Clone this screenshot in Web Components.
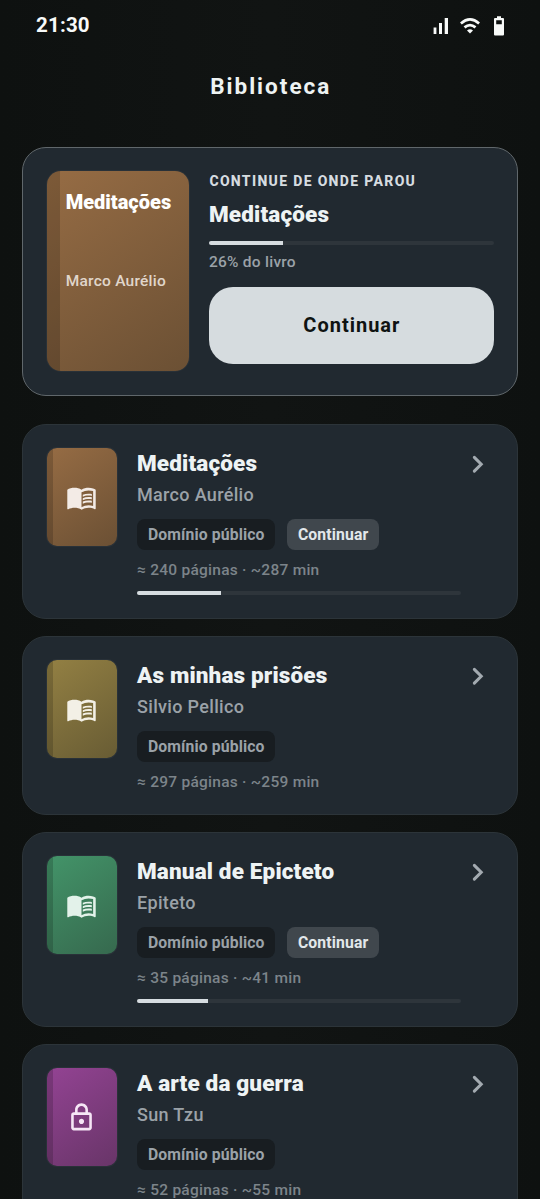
<!DOCTYPE html>
<html lang="pt">
<head>
<meta charset="utf-8">
<title>Biblioteca</title>
<style>
html,body{margin:0;background:#101312}
body{width:540px;height:1199px;overflow:hidden;font-family:Roboto,"Noto Sans",sans-serif;color:#eef3f4}
</style>
</head>
<body>
<library-app></library-app>
<script>
const define = (name, html) => customElements.define(name, class extends HTMLElement {
  connectedCallback() {
    if (this.shadowRoot) return;
    const t = document.createElement('template');
    t.innerHTML = typeof html === 'function' ? html(this) : html;
    this.attachShadow({mode: 'open'}).append(t.content.cloneNode(true));
  }
});

define('status-bar', `
<style>
:host{display:flex;align-items:center;justify-content:space-between;height:50px;padding:0 36.500px 0 36px;box-sizing:border-box;color:#f8faf9}
.time{font-size:20.5px;font-weight:700;letter-spacing:.2px}
.icons{display:flex;align-items:center;padding-top:1px}
svg{display:block}
</style>
<span class="time">21:30</span>
<span class="icons">
<svg width="16" height="16" viewBox="0 0 16 16" fill="#f8faf9" style="margin-right:10.500px"><rect x=".6" y="9.500" width="2.800" height="6.500"/><rect x="6" y="5" width="3" height="11"/><rect x="11.700" y="0" width="3.300" height="16"/></svg>
<svg width="20" height="16" viewBox="0 0 20 16" style="margin-right:14px" fill="none" stroke="#f8faf9" stroke-width="2.7"><path d="M.9 5.400Q10-2.500 19.100 5.400"/><path d="M4.500 9.400Q10 4.700 15.500 9.400"/><path d="M10 15.500 7 12.500Q10 10.200 13 12.500Z" fill="#f8faf9" stroke="none"/></svg>
<svg width="10" height="20" viewBox="0 0 10 20" fill="#f8faf9"><path fill-rule="evenodd" d="M3 .3h4V2h2q1 0 1 1v15.500q0 1-1 1H1q-1 0-1-1V3Q0 2 1 2h2zM2.200 4.200v4h5.600v-4z"/></svg>
</span>`);

define('page-title', `
<style>
:host{display:block;height:97px;box-sizing:border-box;padding:20.500px 0 0 1.500px;text-align:center;font-size:22.5px;line-height:30px;font-weight:700;letter-spacing:2px;color:#eef3f2}
</style><slot></slot>`);

define('progress-bar', el => `
<style>
:host{display:block;height:4px;border-radius:2px;background:#2e353b;overflow:hidden}
div{height:100%;width:${el.getAttribute('value')}%;background:#d6dce0}
</style><div></div>`);

define('book-cover', `
<style>
:host{display:flex;box-sizing:border-box;border-radius:var(--r,10px);overflow:hidden;background:linear-gradient(144.5deg,var(--a),var(--b));box-shadow:0 0 0 1px rgba(255,255,255,.04)}
.spine{flex:none;width:var(--spine,6.500px);background:rgba(0,0,0,.17)}
.face{flex:1;display:flex;flex-direction:column}
</style><div class="spine"></div><div class="face"><slot></slot></div>`);

define('book-icon', el => `
<style>:host{display:block}svg{display:block}</style>
<svg width="31" height="31" viewBox="0 0 24 24" fill="${el.getAttribute('color')}">${el.getAttribute('kind') === 'lock'
 ? '<path d="M18 8h-1V6c0-2.760-2.240-5-5-5S7 3.240 7 6v2H6c-1.100 0-2 .9-2 2v10c0 1.100.9 2 2 2h12c1.100 0 2-.9 2-2V10c0-1.100-.9-2-2-2zM9 6c0-1.660 1.340-3 3-3s3 1.340 3 3v2H9V6zm9 14H6V10h12v10zm-6-3c1.100 0 2-.9 2-2s-.9-2-2-2-2 .9-2 2 .9 2 2 2z"/>'
 : '<path d="M21 5c-1.11-.35-2.33-.5-3.5-.5-1.95 0-4.05.4-5.5 1.5-1.45-1.1-3.55-1.5-5.5-1.5S2.45 4.9 1 6v14.65c0 .25.25.5.5.5.1 0 .15-.05.25-.05C3.1 20.45 5.05 20 6.5 20c1.95 0 4.05.4 5.5 1.5 1.35-.85 3.8-1.5 5.5-1.5 1.65 0 3.35.3 4.75 1.050.1.050.15.050.25.050.25 0 .5-.25.5-.5V6c-.6-.45-1.25-.75-2-1zm0 13.5c-1.1-.35-2.3-.5-3.5-.5-1.7 0-4.15.65-5.5 1.5V8c1.35-.85 3.8-1.5 5.5-1.5 1.2 0 2.4.15 3.5.5v11.5z"/><path d="M17.5 10.5c.88 0 1.73.09 2.5.26V9.24c-.79-.15-1.64-.24-2.5-.24-1.7 0-3.24.29-4.5.83v1.66c1.13-.64 2.7-.99 4.5-.99zM13 12.490v1.66c1.13-.64 2.7-.99 4.5-.99.88 0 1.73.09 2.5.26V11.9c-.79-.15-1.64-.24-2.5-.24-1.7 0-3.24.3-4.5.83zM17.5 14.330c-1.7 0-3.24.29-4.5.83v1.66c1.13-.64 2.7-.99 4.5-.99.88 0 1.73.09 2.5.26v-1.52c-.79-.16-1.64-.24-2.5-.24z"/>'}</svg>`);

define('continue-card', `
<style>
:host{display:flex;box-sizing:border-box;margin:0 22px;height:249px;padding:23px 23.300px 23px 23.700px;border:1px solid #60676b;border-radius:24px;background:#212930}
book-cover{width:142px;height:200px;flex:none;--spine:13px;--r:14px;--a:#966c44;--b:#6b5034;margin:.4px 20.300px 0 0}
.t{font-size:20px;line-height:24px;font-weight:900;color:#fff;margin:18.500px 0 0 6px;white-space:nowrap}
.a{font-size:15.500px;line-height:20px;font-weight:500;letter-spacing:.25px;color:#e0d6cb;margin:57.200px 0 0 6px;white-space:nowrap}
.info{flex:1;display:flex;flex-direction:column}
.k{font-size:14px;line-height:18px;font-weight:800;letter-spacing:1.330px;color:#d6dce0;margin:.6px 0 0 .4px}
.h{font-size:22.500px;line-height:28px;font-weight:900;letter-spacing:.15px;margin:10px 0 13.400px}
.p{font-size:15.500px;line-height:20px;font-weight:500;letter-spacing:.25px;color:#9ba2a8;margin:7.400px 0 14.200px}
button{all:unset;box-sizing:border-box;height:77.300px;padding-left:1px;border-radius:24px;background:#d6dcdf;color:#0f1312;text-align:center;font-size:20px;font-weight:700;letter-spacing:1px}
</style>
<book-cover><div class="t">Meditações</div><div class="a">Marco Aurélio</div></book-cover>
<div class="info"><div class="k">CONTINUE DE ONDE PAROU</div><div class="h">Meditações</div><progress-bar value="26"></progress-bar><div class="p">26% do livro</div><button>Continuar</button></div>`);

define('tag-chip', `
<style>
:host{display:block;height:30.500px;box-sizing:border-box;padding:0 10.600px 0 11px;border-radius:8px;background:#181d21;color:#9ba2a8;font-size:15.750px;line-height:31px;font-weight:700;letter-spacing:.12px;white-space:nowrap}
:host([active]){background:#40474d;color:#e2e7ea}
</style><slot></slot>`);

define('book-card', el => {
  const g = n => el.getAttribute(n);
  return `
<style>
:host{display:flex;align-items:flex-start;box-sizing:border-box;margin:0 22px 16.800px;padding:23.300px 23.300px 21.700px 23.700px;border:1px solid #2c3439;border-radius:24px;background:#212930}
book-cover{width:70px;height:98px;flex:none;margin-right:20.300px;--a:${g('from')};--b:${g('to')}}
book-icon{margin:34px auto 0 13px}
.info{flex:1;min-width:0}
.t{font-size:22.500px;line-height:30px;font-weight:900;letter-spacing:.15px;height:31px}
.a{font-size:18px;line-height:22px;font-weight:500;color:#9ba2a8;letter-spacing:.33px;margin:5px 0 13px}
.chips{display:flex;gap:11.700px}
.p{font-size:15.500px;line-height:20px;font-weight:500;letter-spacing:.25px;color:#7c848a;margin-top:10px;height:21px}
progress-bar{margin:10.500px 0 1px}
.chev{display:block;flex:none}
</style>
<book-cover><book-icon kind="${g('kind') || 'book'}" color="${g('ink')}"></book-icon></book-cover>
<div class="info"><div class="t"><slot></slot></div><div class="a">${g('author')}</div>
<div class="chips"><tag-chip>Domínio público</tag-chip>${g('value') ? '<tag-chip active>Continuar</tag-chip>' : ''}</div>
<div class="p">${g('length')}</div>${g('value') ? `<progress-bar value="${g('value')}"></progress-bar>` : ''}</div>
<svg class="chev" width="33" height="33" viewBox="0 0 24 24" fill="none" stroke="#a3aab0" stroke-width="2.200" stroke-linecap="round" stroke-linejoin="miter"><path d="M9.700 6.800 14.700 11.800 9.700 16.800"/></svg>`;
});

define('library-app', `
<style>
:host{display:flex;flex-direction:column;height:1199px;overflow:hidden;background:linear-gradient(90deg,#0e1110,#111413 50%,#0e1110)}
status-bar,page-title,continue-card,book-card{flex:none}
continue-card{margin-bottom:28px}
</style>
<status-bar></status-bar>
<page-title>Biblioteca</page-title>
<continue-card></continue-card>
<book-card from="#966c44" to="#6b5034" ink="#f3ebe6" author="Marco Aurélio" length="≈ 240 páginas · ~287 min" value="26">Meditações</book-card>
<book-card from="#938043" to="#685c34" ink="#f3f0e6" author="Silvio Pellico" length="≈ 297 páginas · ~259 min">As minhas prisões</book-card>
<book-card from="#439469" to="#36694e" ink="#e3f2ea" author="Epiteto" length="≈ 35 páginas · ~41 min" value="22">Manual de Epicteto</book-card>
<book-card from="#934393" to="#683568" ink="#f6e6f6" kind="lock" author="Sun Tzu" length="≈ 52 páginas · ~55 min">A arte da guerra</book-card>`);
</script>
</body>
</html>
